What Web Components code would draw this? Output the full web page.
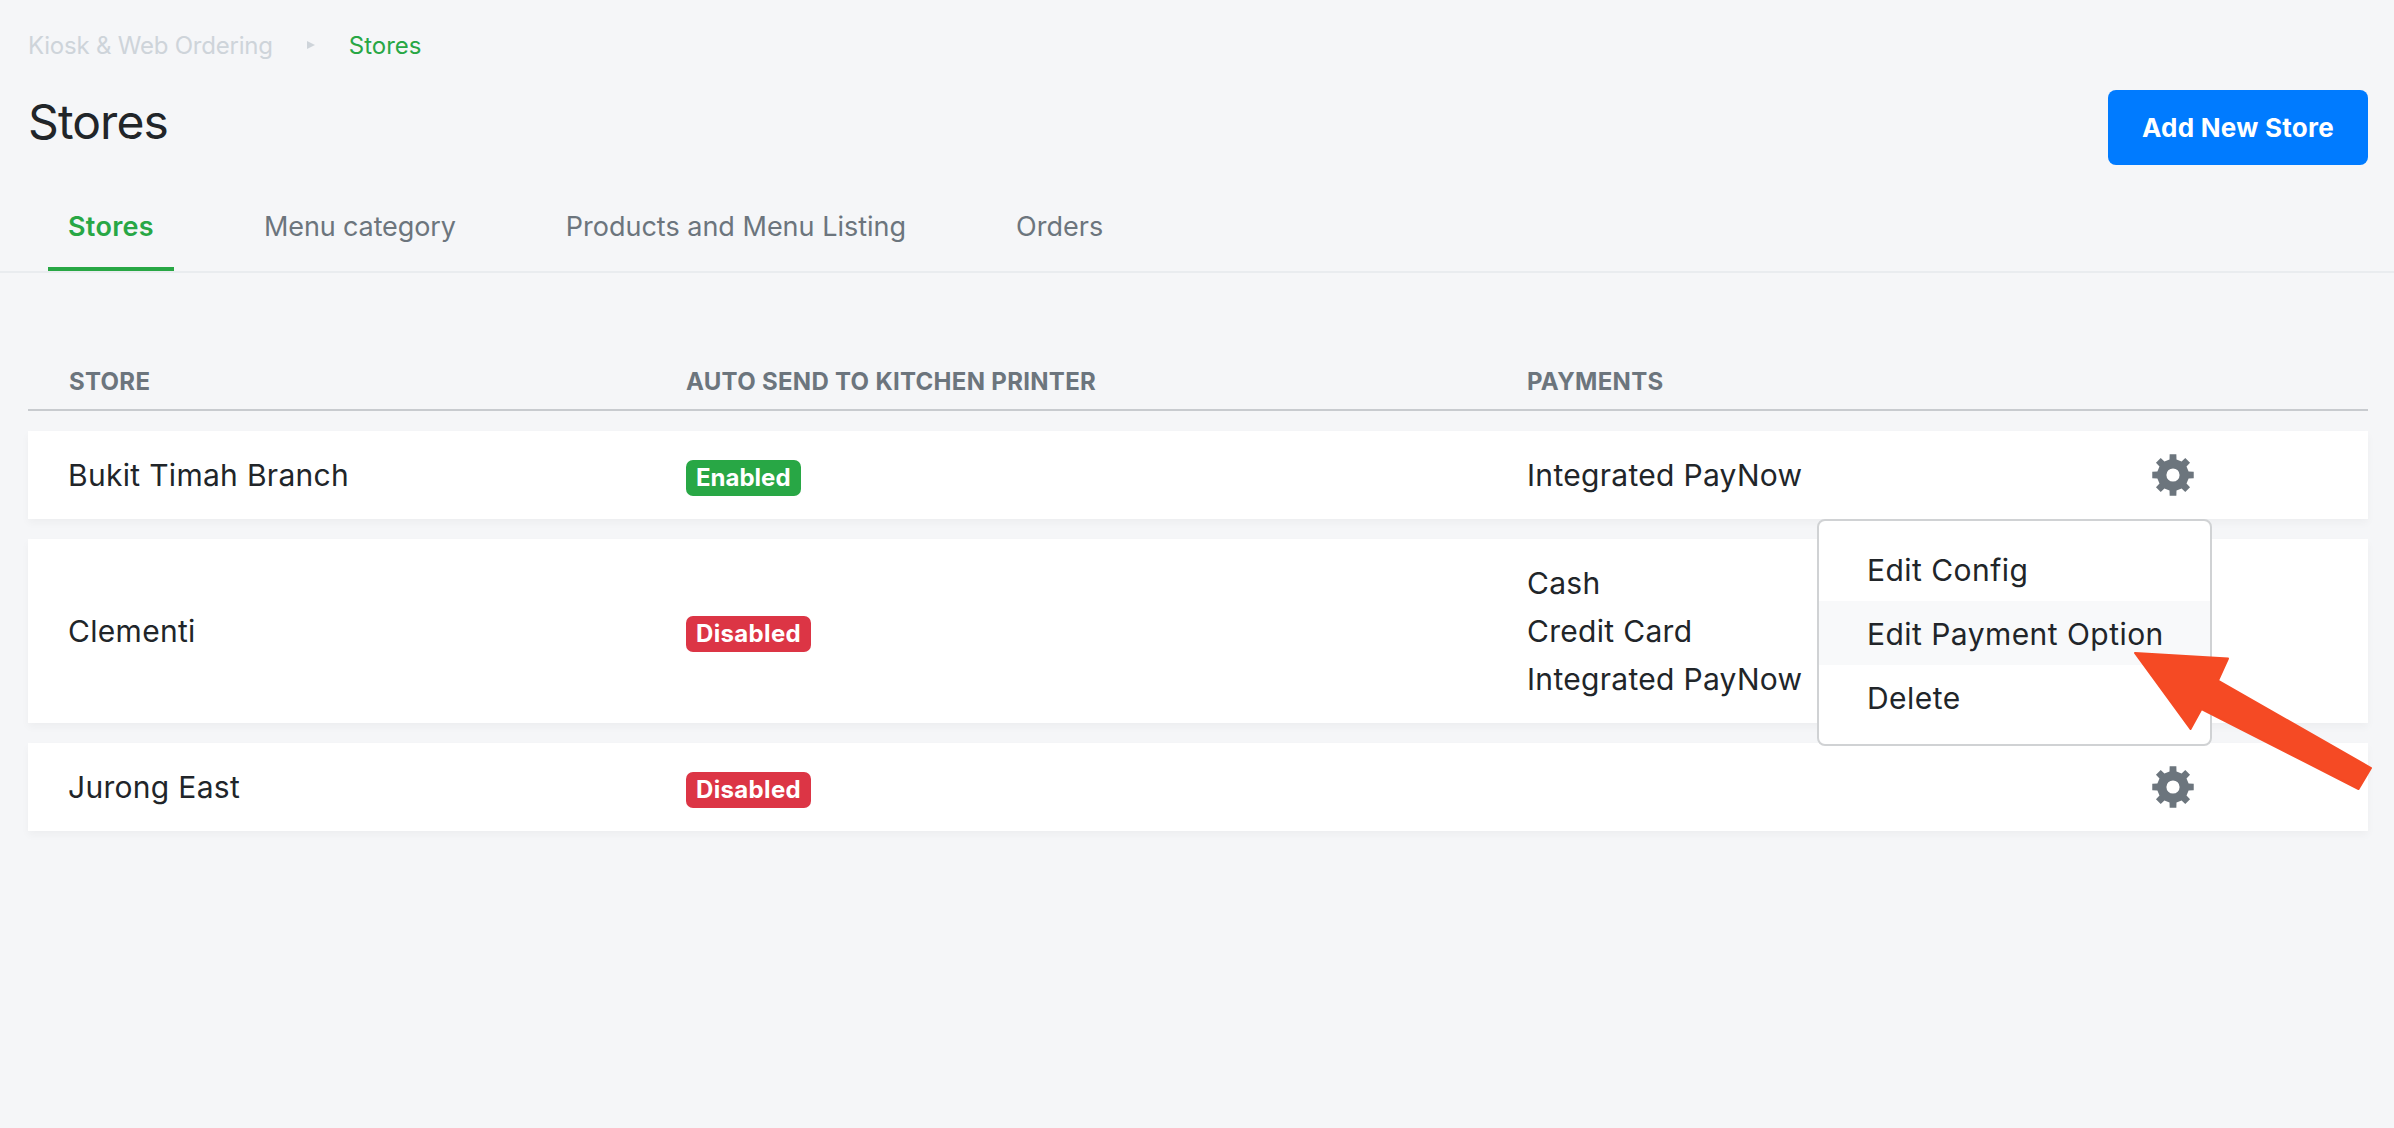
<!doctype html>
<html><head><meta charset="utf-8">
<style>
html,body{margin:0;background:#f5f6f8;height:100%}
body{font-family:Inter,"Liberation Sans",sans-serif;color:#212529;font-size:30px;letter-spacing:.3px}
</style></head><body>
<store-page></store-page>
<script>
function gearPath(){
  const cx=21,cy=21,R=21,r=16,n=8;let d='';
  for(let i=0;i<n;i++){
    const a=(i*45-90)*Math.PI/180;
    const w1=0.22,w2=0.16;
    const pts=[[r,a-w1],[R,a-w2],[R,a+w2],[r,a+w1]];
    pts.forEach((p,j)=>{const x=(cx+p[0]*Math.cos(p[1])).toFixed(2),y=(cy+p[0]*Math.sin(p[1])).toFixed(2);d+=(i==0&&j==0?'M':'L')+x+' '+y+' ';});
  }
  d+='Z M'+(cx+6.6)+' '+cy+' A6.6 6.6 0 1 0 '+(cx-6.6)+' '+cy+' A6.6 6.6 0 1 0 '+(cx+6.6)+' '+cy+' Z';
  return d;
}
customElements.define('gear-icon',class extends HTMLElement{connectedCallback(){
  this.attachShadow({mode:'open'}).innerHTML=`<style>:host{display:block;width:42px;height:42px}svg{display:block}</style>
  <svg width="42" height="42" viewBox="0 0 42 42"><path fill="#6c757d" fill-rule="evenodd" d="${gearPath()}"/></svg>`;
}});
customElements.define('status-badge',class extends HTMLElement{connectedCallback(){
  const on=this.getAttribute('tone')=='on';
  this.attachShadow({mode:'open'}).innerHTML=`<style>:host{display:inline-block;background:${on?'#28a745':'#dc3545'};color:#fff;font:700 24px/36px Inter,sans-serif;height:36px;padding:0 10px;border-radius:7px;white-space:nowrap;letter-spacing:${on?0:.35}px}</style><slot></slot>`;
}});
customElements.define('bread-crumb',class extends HTMLElement{connectedCallback(){
  this.attachShadow({mode:'open'}).innerHTML=`<style>
  :host{display:flex;align-items:center;height:34px;margin-top:28px;font-size:24px;letter-spacing:0;color:#ced4da}
  svg{margin:0 34px;display:block}
  span{letter-spacing:-.22px}
  b{font-weight:400;color:#28a745}</style>
  <span>Kiosk &amp; Web Ordering</span><svg width="8" height="8" viewBox="0 0 8 8"><path d="M0 0L8 4L0 8Z" fill="#ced4da"/></svg><b>Stores</b>`;
}});
customElements.define('page-header',class extends HTMLElement{connectedCallback(){
  this.attachShadow({mode:'open'}).innerHTML=`<style>
  :host{display:flex;justify-content:space-between;align-items:flex-start;margin-top:28px}
  h1{margin:1px 0 -1px;font:400 48px/62px Inter,sans-serif;letter-spacing:-.9px;color:#212529}
  button{all:unset;box-sizing:border-box;width:260px;height:75px;background:#007bff;color:#fff;font:700 26px/75px Inter,sans-serif;letter-spacing:.25px;text-align:center;border-radius:8px}
  </style><h1><slot></slot></h1><button>Add New Store</button>`;
}});
customElements.define('tab-bar',class extends HTMLElement{connectedCallback(){
  this.attachShadow({mode:'open'}).innerHTML=`<style>
  :host{display:flex;gap:70px;height:106px;box-sizing:content-box;border-bottom:2px solid #e9ecef;padding-left:48px;margin:0 -26px 0 -28px;letter-spacing:0}
  span{box-sizing:border-box;height:106px;padding:44px 20px 0;font-size:27px;line-height:36px;color:#6c757d;border-bottom:4px solid transparent}
  .a{color:#28a745;font-weight:600;border-bottom-color:#28a745;letter-spacing:.3px}
  .m{letter-spacing:-.12px}
  </style><span class="a">Stores</span><span class="m">Menu category</span><span>Products and Menu Listing</span><span>Orders</span>`;
}});
const COLS='grid-template-columns:617px 841px 625px 1fr;padding-left:41px;';
customElements.define('table-head',class extends HTMLElement{connectedCallback(){
  this.attachShadow({mode:'open'}).innerHTML=`<style>
  :host{display:grid;${COLS}margin-top:90px;height:46px;border-bottom:2px solid #c8cbcf;font:700 24px/38px Inter,sans-serif;color:#6c757d;letter-spacing:.3px}
  </style><span>STORE</span><span>AUTO SEND TO KITCHEN PRINTER</span><span>PAYMENTS</span>`;
}});
customElements.define('store-row',class extends HTMLElement{connectedCallback(){
  const gear=this.hasAttribute('gear')?'<gear-icon></gear-icon>':'';
  this.attachShadow({mode:'open'}).innerHTML=`<style>
  :host{display:grid;${COLS}align-items:center;margin-top:20px;background:#fff;box-shadow:0 4px 8px rgba(0,0,0,.035);padding-top:20px;padding-bottom:20px;min-height:48px}
  .n{margin:0 0 0 -1px}.b{display:flex;margin:3px 0 -3px}.p{line-height:48px;margin:0}
  </style><div class="n"><slot name="name"></slot></div><div class="b"><slot name="badge"></slot></div><div class="p"><slot name="pay"></slot></div><div>${gear}</div>`;
}});
customElements.define('action-menu',class extends HTMLElement{connectedCallback(){
  this.attachShadow({mode:'open'}).innerHTML=`<style>
  :host{position:absolute;left:1817px;top:519px;width:395px;height:227px;box-sizing:border-box;background:#fff;border:2px solid #d0d2d4;border-radius:8px;padding:16px 0;z-index:2}
  div{height:64px;line-height:66px;padding-left:48px;font-size:30px;letter-spacing:.45px;color:#212529}
  .h{background:#f8f9fa}
  </style><div>Edit Config</div><div class="h">Edit Payment Option</div><div>Delete</div>`;
}});
customElements.define('call-out',class extends HTMLElement{connectedCallback(){
  this.attachShadow({mode:'open'}).innerHTML=`<style>:host{position:absolute;left:0;top:0;z-index:3;pointer-events:none}svg{display:block}</style>
  <svg width="2394" height="1128" viewBox="0 0 2394 1128"><path d="M2135 653 L2228 658.5 L2218 680.5 L2371 768 L2358.5 789 L2201.5 709 L2190.5 729 Z" fill="#f54a24" stroke="#f54a24" stroke-width="2" stroke-linejoin="round"/></svg>`;
}});
customElements.define('store-page',class extends HTMLElement{connectedCallback(){
  this.attachShadow({mode:'open'}).innerHTML=`<style>:host{display:block;padding:0 26px 0 28px;height:1128px;box-sizing:border-box;position:relative;overflow:hidden}</style>
  <bread-crumb></bread-crumb>
  <page-header>Stores</page-header>
  <tab-bar></tab-bar>
  <table-head></table-head>
  <store-row gear><span slot="name">Bukit Timah Branch</span><status-badge slot="badge" tone="on">Enabled</status-badge><div slot="pay">Integrated PayNow</div></store-row>
  <store-row gear><span slot="name">Clementi</span><status-badge slot="badge">Disabled</status-badge><div slot="pay">Cash<br>Credit Card<br>Integrated PayNow</div></store-row>
  <store-row gear><span slot="name">Jurong East</span><status-badge slot="badge">Disabled</status-badge></store-row>
  <action-menu></action-menu>
  <call-out></call-out>`;
}});
</script>
</body></html>
